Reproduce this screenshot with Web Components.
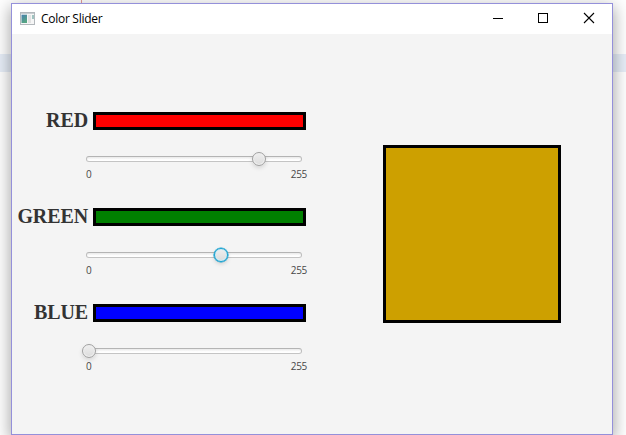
<!DOCTYPE html>
<html lang="en">
<head>
<meta charset="utf-8">
<title>Color Slider</title>
<style>
html,body{margin:0;height:100%;overflow:hidden}
</style>
</head>
<body>
<desktop-backdrop>
  <app-window caption="Color Slider">
    <color-mixer></color-mixer>
  </app-window>
</desktop-backdrop>
<script>
class Base extends HTMLElement {
  render(html) { this.attachShadow({ mode: "open" }).innerHTML = html; }
}

customElements.define("desktop-backdrop", class extends Base {
  connectedCallback() {
    this.render(`<style>
      :host{display:block;box-sizing:border-box;width:626px;height:435px;padding:3px 0 0 11px;overflow:hidden;
        background:linear-gradient(#e39a9a,#e39a9a) 81px 0/1px 3px no-repeat,
          linear-gradient(#e6edf7,#e6edf7) 0 54px/100% 18px no-repeat,#fefefe}
    </style><slot></slot>`);
  }
});

customElements.define("app-window", class extends Base {
  connectedCallback() {
    this.render(`<style>
      :host{display:flex;flex-direction:column;box-sizing:border-box;width:602px;height:432px;border:1px solid #9490da;
        background:#f4f4f4;box-shadow:0 5px 15px 1px rgba(0,0,0,.35)}
      header{display:flex;align-items:center;height:30px;background:#fff;flex:none}
      .icon{margin-left:8px;width:16px;height:14px;flex:none}
      .title{margin-left:5px;font:12px/18px "Open Sans","Noto Sans",sans-serif;letter-spacing:-.28px;color:#000;flex:1;white-space:nowrap}
      .btns{display:flex;flex:none;width:138px}
      .btns svg{width:46px;height:30px;display:block}
    </style>
    <header>
      <svg class="icon" viewBox="0 0 16 14">
        <defs><linearGradient id="g" x2=".5" y2="1"><stop stop-color="#477fae"/><stop offset="1" stop-color="#57a683"/></linearGradient></defs>
        <rect x=".5" y=".5" width="14" height="12" fill="#f6f6f6" stroke="#b3b8bc"/>
        <path d="M1 1.5h13" stroke="#c9ced1"/>
        <rect x="1.5" y="2.7" width="5.5" height="8.3" fill="url(#g)"/>
        <rect x="8" y="3" width="3" height="8" fill="#e2e2e2"/>
        <rect x="12" y="3" width="2" height="4" fill="#9fc3c0"/>
      </svg>
      <span class="title">${this.getAttribute("caption")}</span>
      <div class="btns">
        <svg viewBox="0 0 46 30"><path d="M19 14.5h10" stroke="#000" fill="none"/></svg>
        <svg viewBox="0 0 46 30"><rect x="18.5" y="9.5" width="9" height="9" stroke="#000" fill="none"/></svg>
        <svg viewBox="0 0 46 30"><path d="M18 9l10 10M28 9L18 19" stroke="#000" stroke-width="1.1" fill="none"/></svg>
      </div>
    </header>
    <slot></slot>`);
  }
});

customElements.define("value-slider", class extends Base {
  connectedCallback() {
    const at = this.getAttribute("at");
    const focus = this.hasAttribute("focused");
    this.render(`<style>
      :host{display:block;width:216px}
      .track{position:relative;box-sizing:border-box;height:6px;border:1px solid #bdbdbd;border-top-color:#b4b4b4;border-bottom-color:#c4c4c4;border-radius:3px;
        background:linear-gradient(#e9e9e9,#fff 70%)}
      .thumb{position:absolute;box-sizing:border-box;width:14px;height:14px;left:${at - 8}px;top:-5px;border-radius:50%;
        border:1px solid #a0a0a0;background:linear-gradient(#efefef,#dcdcdc);box-shadow:inset 0 0 0 1px #f0f0f0,0 2px 4px rgba(0,0,0,.13)}
      .focus{border-color:#0f9fd0;box-shadow:inset 0 0 0 1px #d5eef5,0 0 0 .6px #0f9fd0,0 2px 4px rgba(0,0,0,.15)}
      .scale{display:flex;justify-content:space-between;margin:6px -5px 0 0;font:10px/13px "Open Sans","Noto Sans",sans-serif;letter-spacing:-.3px;color:#484848}
    </style>
    <div class="track"><div class="thumb ${focus ? "focus" : ""}"></div></div>
    <div class="scale"><span>0</span><span>255</span></div>`);
  }
});

customElements.define("channel-row", class extends Base {
  connectedCallback() {
    this.render(`<style>
      :host{display:grid;grid-template-columns:76px 213px;column-gap:5px;height:96px;grid-template-rows:18px auto;row-gap:26px;align-content:start}
      .name{justify-self:end;font:bold 20px/16px "Liberation Serif",serif;letter-spacing:-.1px;color:#333}
      .bar{box-sizing:border-box;height:18px;border:3px solid #000;background:${this.getAttribute("color")}}
      .slot{grid-column:1/3;padding-left:74px}
    </style>
    <span class="name">${this.getAttribute("name")}</span><div class="bar"></div>
    <div class="slot"><slot></slot></div>`);
  }
});

customElements.define("color-mixer", class extends Base {
  connectedCallback() {
    this.render(`<style>
      :host{display:flex;flex:1;justify-content:space-between;align-items:flex-start;padding:78px 51px 0 0}
      .swatch{box-sizing:border-box;width:178px;height:178px;margin-top:33px;border:3px solid #000;background:#cda000}
    </style>
    <div>
      <channel-row name="RED" color="#f00"><value-slider at="173"></value-slider></channel-row>
      <channel-row name="GREEN" color="#008000"><value-slider at="135" focused></value-slider></channel-row>
      <channel-row name="BLUE" color="#00f"><value-slider at="3"></value-slider></channel-row>
    </div>
    <div class="swatch"></div>`);
  }
});
</script>
</body>
</html>
